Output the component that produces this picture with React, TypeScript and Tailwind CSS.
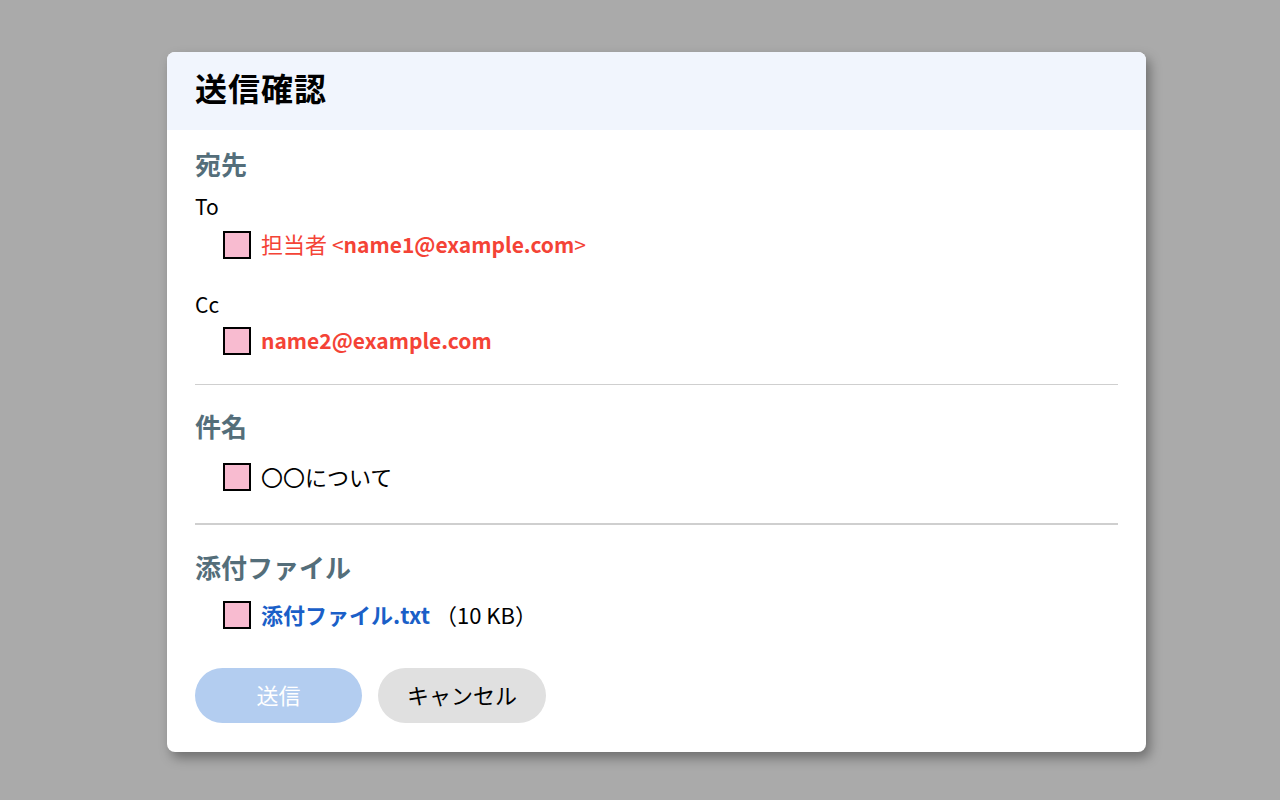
import React from "react";

const FONT = { fontFamily: '"Noto Sans CJK JP", "Noto Sans", sans-serif' };

function Box() {
  return <span className="inline-block w-[28px] h-[28px] border-2 border-black bg-[#f8bbd0] shrink-0" />;
}

export default function App() {
  return (
    <div className="min-h-[800px] w-full bg-[#aaaaaa] pt-[52px] pl-[167px]" style={FONT}>
      <div className="w-[979px] h-[700px] bg-white rounded-[8px] overflow-hidden shadow-[4px_6px_12px_rgba(0,0,0,0.35)]">
        <div className="h-[78px] bg-[#f1f5fd] flex items-center px-[28px] pb-[8px]">
          <h1 className="text-[32px] font-bold text-black leading-none tracking-[1px]">送信確認</h1>
        </div>
        <div className="px-[28px]">
          <div className="pt-[16px] h-[52px] flex items-center">
            <h2 className="text-[26px] font-bold text-[#546e7a] leading-[34px]">宛先</h2>
          </div>
          <div className="mt-[10px] h-[30px] flex items-center text-[21px] text-black">To</div>
          <div className="mt-[9px] h-[28px] flex items-center pl-[28px] gap-[10px]">
            <Box />
            <span className="text-[22px] text-[#f44336] whitespace-nowrap leading-none -mt-[3px]">
              担当者 <span className="text-[21px]">&lt;<b className="font-bold">name1@example.com</b>&gt;</span>
            </span>
          </div>
          <div className="mt-[31px] h-[30px] flex items-center text-[21px] text-black">Cc</div>
          <div className="mt-[7px] h-[28px] flex items-center pl-[28px] gap-[10px]">
            <Box />
            <span className="text-[21px] text-[#f44336] font-bold leading-none -mt-[2px]">name2@example.com</span>
          </div>
          <div className="mt-[29px] h-px bg-[#cfcfcf]" />
          <div className="mt-[23px] h-[34px] flex items-center">
            <h2 className="text-[26px] font-bold text-[#546e7a]">件名</h2>
          </div>
          <div className="mt-[21px] h-[28px] flex items-center pl-[28px] gap-[10px]">
            <Box />
            <span className="text-[22px] text-black leading-none -mt-[3px]">〇〇について</span>
          </div>
          <div className="mt-[32px] h-[2px] bg-[#cfcfcf]" />
          <div className="mt-[24px] h-[34px] flex items-center">
            <h2 className="text-[26px] font-bold text-[#546e7a]">添付ファイル</h2>
          </div>
          <div className="mt-[18px] h-[28px] flex items-center pl-[28px] gap-[10px]">
            <Box />
            <span className="text-[22px] whitespace-nowrap leading-none -mt-[3px]">
              <b className="font-bold text-[#1a5fc8]">添付ファイル.txt</b>
              <span className="text-black"> （10 KB）</span>
            </span>
          </div>
          <div className="mt-[39px] flex gap-[16px]">
            <button className="w-[167px] h-[55px] rounded-full bg-[#b3cdf0] text-white text-[22px] pb-[3px]">送信</button>
            <button className="w-[168px] h-[55px] rounded-full bg-[#e0e0e0] text-black text-[22px] pb-[3px]">キャンセル</button>
          </div>
        </div>
      </div>
    </div>
  );
}
